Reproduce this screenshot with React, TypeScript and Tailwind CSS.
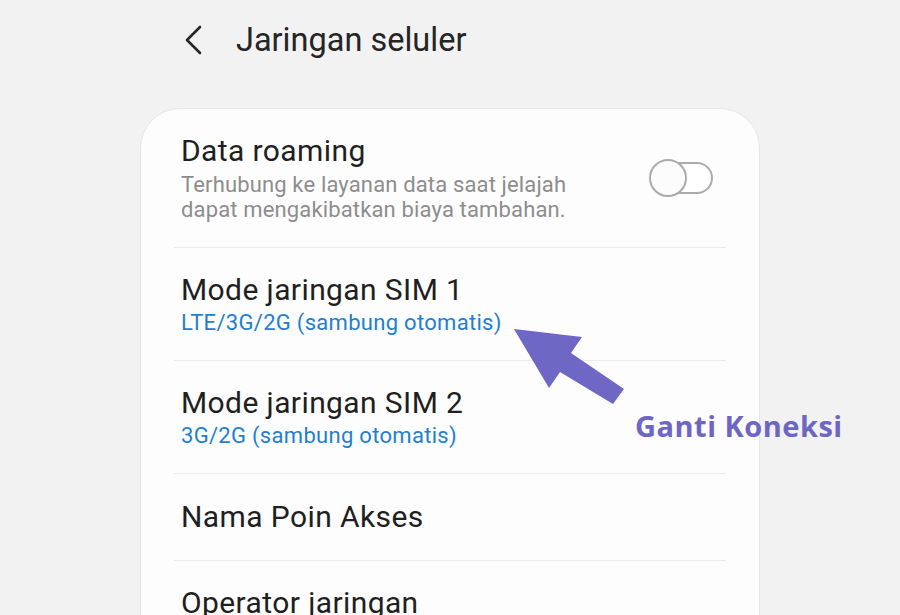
import React from "react";

type Item = {
  title: string;
  sub?: string;
};

const items: Item[] = [
  { title: "Mode jaringan SIM 1", sub: "LTE/3G/2G (sambung otomatis)" },
  { title: "Mode jaringan SIM 2", sub: "3G/2G (sambung otomatis)" },
  { title: "Nama Poin Akses" },
  { title: "Operator jaringan" },
];

const Toggle: React.FC = () => (
  <div className="relative h-[38px] w-[64px] shrink-0">
    <div className="absolute right-0 top-[3px] h-[32px] w-[54px] rounded-full border-2 border-[#ababab] bg-white" />
    <div className="absolute left-0 top-0 h-[38px] w-[38px] rounded-full border-2 border-[#ababab] bg-[#fcfcfc]" />
  </div>
);

const App: React.FC = () => {
  return (
    <div
      className="relative h-[615px] w-[900px] overflow-hidden bg-[#f2f2f2]"
      style={{ fontFamily: "Roboto, 'Liberation Sans', sans-serif" }}
    >
      {/* Header */}
      <div className="flex h-[108px] items-start pl-[184px] pt-[24px]">
        <svg width="20" height="30" viewBox="0 0 20 30" className="mt-[1px]">
          <path
            d="M16 2 L3 15 L16 28"
            fill="none"
            stroke="#262626"
            strokeWidth="2.6"
            strokeLinecap="round"
            strokeLinejoin="round"
          />
        </svg>
        <h1 className="ml-[32px] -mt-[5px] text-[32.5px] leading-[42px] text-[#252525]">
          Jaringan seluler
        </h1>
      </div>

      {/* Card */}
      <div className="ml-[140px] w-[620px] rounded-t-[40px] border border-[#e6e6e6] bg-[#fdfdfd] px-[33px] pb-[40px]">
        <div className="flex items-center justify-between px-[7px] pb-[25px] pt-[25px]">
          <div>
            <div className="text-[30px] leading-[34px] tracking-[0.4px] text-[#1f1f1f]">
              Data roaming
            </div>
            <div className="mt-[4px] text-[22px] leading-[25px] tracking-[0.15px] text-[#8d8d8d]">
              Terhubung ke layanan data saat jelajah
              <br />
              dapat mengakibatkan biaya tambahan.
            </div>
          </div>
          <div className="mr-[6px]">
            <Toggle />
          </div>
        </div>

        {items.map((it, i) => (
          <div key={it.title} className="border-t border-[#ececec]">
            <div
              className={`px-[7px] ${
                it.sub ? "pb-[24px] pt-[25px]" : i === 2 ? "pb-[26px] pt-[26px]" : "pb-[20px] pt-[25px]"
              }`}
            >
              <div className="text-[30px] leading-[34px] tracking-[0.4px] text-[#1f1f1f]">
                {it.title}
              </div>
              {it.sub && (
                <div className="mt-[3px] text-[22px] leading-[26px] tracking-[0.3px] text-[#1f7fd0]">
                  {it.sub}
                </div>
              )}
            </div>
          </div>
        ))}
      </div>

      {/* Annotation arrow */}
      <svg
        className="absolute left-0 top-0"
        width="900"
        height="615"
        viewBox="0 0 900 615"
      >
        <polygon
          points="514,329 582,337 571,353 624,389 613,404 560,372 549,388"
          fill="#6f67c5"
        />
      </svg>
      <div
        className="absolute left-[635px] top-[406px] text-[29px] font-bold leading-[40px] tracking-[0.5px] text-[#6e66c4]"
        style={{ fontFamily: "'Open Sans', 'Noto Sans', sans-serif" }}
      >
        Ganti Koneksi
      </div>
    </div>
  );
};

export default App;
